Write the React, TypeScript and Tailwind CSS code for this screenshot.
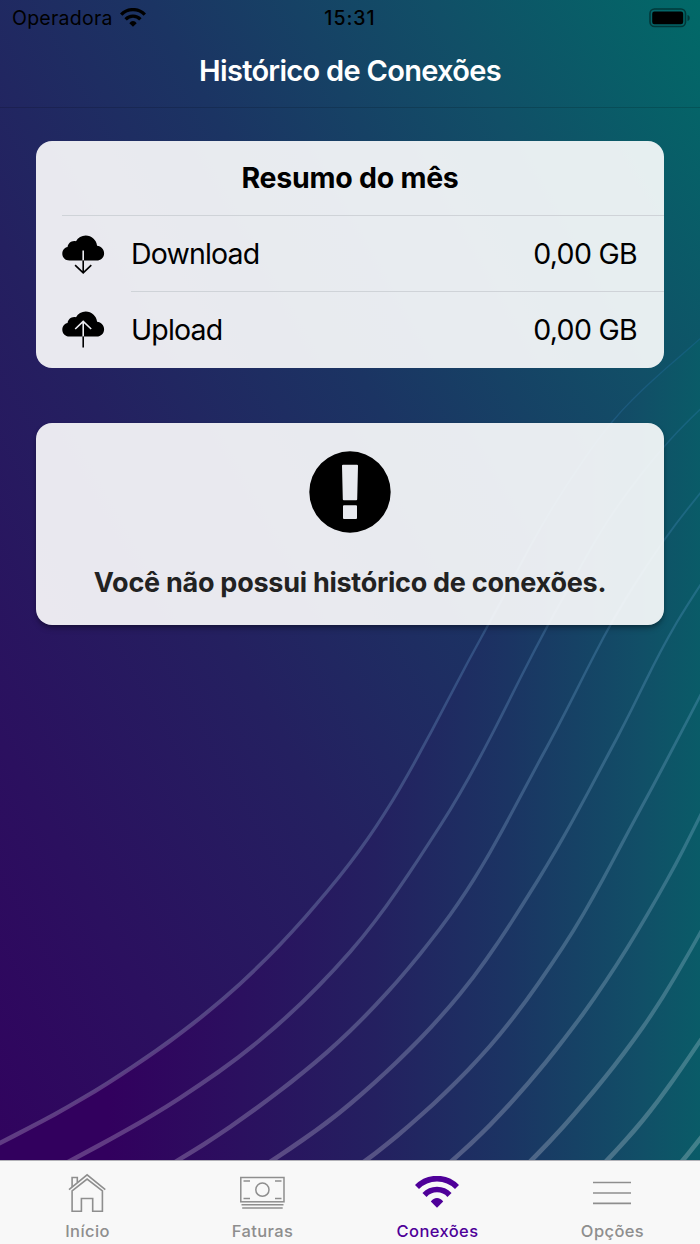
import React from 'react';

type Point = [number, number];

// Centre lines of the decorative curves, from the bottom left to the top right
const CURVES: Point[][] = [
  [[-60, 1172], [0, 1143], [108, 1083], [223, 999], [350, 863], [487, 627], [558, 499], [612, 422], [715, 325]],
  [[12, 1191], [70, 1161], [180, 1098], [260, 1040], [350, 952], [440, 826], [563, 598], [615, 510], [670, 440], [720, 390]],
  [[120, 1195], [230, 1127], [350, 1031], [450, 915], [547, 747], [625, 600], [665, 539], [720, 468]],
  [[215, 1199], [350, 1104], [460, 994], [538, 880], [617, 738], [677, 622], [720, 555]],
  [[310, 1201], [397, 1136], [490, 1046], [563, 947], [640, 810], [720, 658]],
  [[410, 1198], [490, 1125], [583, 1014], [667, 880], [725, 766]],
  [[495, 1197], [563, 1127], [643, 1027], [725, 890]],
  [[570, 1200], [643, 1120], [725, 1005]],
  [[650, 1200], [700, 1139], [725, 1106]],
];

// Unit tangent at a knot, weighted by the length of the two segments around it
const tangent = (points: Point[], i: number): Point => {
  const [x, y] = points[i];
  const a = points[i - 1] ?? [2 * x - points[i + 1][0], 2 * y - points[i + 1][1]];
  const b = points[i + 1] ?? [2 * x - a[0], 2 * y - a[1]];
  const before = Math.hypot(x - a[0], y - a[1]);
  const after = Math.hypot(b[0] - x, b[1] - y);
  const tx = ((x - a[0]) / before) * after + ((b[0] - x) / after) * before;
  const ty = ((y - a[1]) / before) * after + ((b[1] - y) / after) * before;
  const length = Math.hypot(tx, ty);
  return [tx / length, ty / length];
};

const smooth = (points: Point[]) =>
  points
    .slice(0, -1)
    .map((p, i) => {
      const next = points[i + 1];
      const handle = Math.hypot(next[0] - p[0], next[1] - p[1]) / 3;
      const t1 = tangent(points, i);
      const t2 = tangent(points, i + 1);
      const c1 = [p[0] + t1[0] * handle, p[1] + t1[1] * handle];
      const c2 = [next[0] - t2[0] * handle, next[1] - t2[1] * handle];
      return `C${c1} ${c2} ${next}`;
    })
    .join(' ');

/** The lines get thinner as they climb */
const ribbon = (points: Point[]) => {
  const side = (sign: number) =>
    points.map(([x, y], i): Point => {
      const [tx, ty] = tangent(points, i);
      const half = (Math.max(1.1, 1.1 + ((y - 350) / 810) * 3.5) / 2) * sign;
      return [x - ty * half, y + tx * half];
    });
  const left = side(1);
  const right = side(-1).reverse();
  return `M${left[0]} ${smooth(left)} L${right[0]} ${smooth(right)} Z`;
};

const BrandStops = () => (
  <>
    <stop offset="0" stopColor="#32005e" />
    <stop offset="0.4" stopColor="#242060" />
    <stop offset="0.6" stopColor="#1b3463" />
    <stop offset="0.8" stopColor="#114f67" />
    <stop offset="1" stopColor="#006b68" />
  </>
);

const Background = () => (
  <svg className="absolute inset-0 -z-10 h-full w-full" viewBox="0 0 700 1244" aria-hidden="true">
    <defs>
      <linearGradient id="base" gradientUnits="userSpaceOnUse" x1="0" y1="1244" x2="1075" y2="639">
        <BrandStops />
      </linearGradient>
      <linearGradient id="wave" gradientUnits="userSpaceOnUse" x1="108" y1="0" x2="775" y2="0">
        <BrandStops />
      </linearGradient>
      <linearGradient id="line" gradientUnits="userSpaceOnUse" x1="0" y1="1160" x2="0" y2="330">
        <stop offset="0" stopColor="#ffffff" stopOpacity="0.23" />
        <stop offset="0.6" stopColor="#6fa8d8" stopOpacity="0.27" />
        <stop offset="1" stopColor="#2070b0" stopOpacity="0.28" />
      </linearGradient>
    </defs>
    <rect width="700" height="1244" fill="url(#base)" />
    <path d={`M${CURVES[0][0]} ${smooth(CURVES[0])} V1244 H-60 Z`} fill="url(#wave)" />
    {CURVES.map((points, i) => (
      <path key={i} d={ribbon(points)} fill="url(#line)" />
    ))}
  </svg>
);

const WifiIcon = ({ className }: { className: string }) => (
  <svg className={className} viewBox="0 0 44 32" fill="none" stroke="currentColor" strokeWidth="5.6">
    <path d="M2 11A28 28 0 0 1 42 11" />
    <path d="M9.5 19A17.1 17.1 0 0 1 34.5 19" />
    <path d="M22 31.8 15.8 25.6Q18.3 22.1 22 22.1T28.2 25.6Z" fill="currentColor" stroke="none" />
  </svg>
);

const BatteryIcon = () => (
  <svg className="h-5 w-[42px]" viewBox="0 0 42 20" fill="none">
    <rect x="1" y="1" width="35.5" height="17.5" rx="4.5" stroke="#000" strokeOpacity="0.45" strokeWidth="1.6" />
    <rect x="3.2" y="3.5" width="31" height="12.7" rx="2.2" fill="#000" />
    <path d="M38.5 7v6c1.9-.6 2.2-1.8 2.2-3s-.3-2.4-2.2-3Z" fill="#000" fillOpacity="0.45" />
  </svg>
);

const CLOUD =
  'M7.5 26.5C3 26.5.3 23.4.3 19.7c0-3.4 2.2-6 5.3-6.7C5.9 9.4 9.5 6.2 14 7.3 16 3.6 19.6 1.5 23.7 1.5c6 0 10.6 4.3 11.4 10.2 4 .5 7 3.5 7 7.5 0 4.3-3.2 7.3-7.4 7.3Z';

const CloudIcon = ({ direction }: { direction: 'down' | 'up' }) => (
  <svg className="h-10 w-[43px]" viewBox="0 0 43 40" fill="none" strokeWidth="1.6">
    <path d={CLOUD} fill="#000" />
    {direction === 'down' ? (
      <>
        <path d="M21.2 16.5v10" stroke="#ececf1" />
        <path d="M21.2 26.5v12M13.1 31.2l8.1 7.7 8.1-7.7" stroke="#000" />
      </>
    ) : (
      <>
        <path d="M21.2 26.5V11.5M13.2 19l8-7.7 8 7.7" stroke="#ececf1" />
        <path d="M21.2 26.5V37.5" stroke="#000" />
      </>
    )}
  </svg>
);

const AlertIcon = () => (
  <svg className="h-[82px] w-[82px]" viewBox="0 0 82 82">
    <path
      fillRule="evenodd"
      d="M41 .3a40.7 40.7 0 1 0 0 81.4 40.7 40.7 0 0 0 0-81.4ZM34 13.8h14q1 0 1 1l-.8 33.5q0 1-1 1H34.8q-1 0-1-1L33 14.8q0-1 1-1ZM35 54.3h12q1 0 1 1v11.7q0 1-1 1H35q-1 0-1-1V55.3q0-1 1-1Z"
    />
  </svg>
);

const HomeIcon = () => (
  <svg className="h-10 w-[38px]" viewBox="0 0 38 40" fill="none" stroke="currentColor" strokeWidth="1.6">
    <path d="M1 16.6 19.1 1.8l18.2 14.8" />
    <path d="M4.1 14V4.5h5.2v5.1" />
    <path d="M4.1 17.8V38.2h9.3V25.500h11.300V38.200H34.400V17.800L19.100 6Z" />
  </svg>
);

const MoneyIcon = () => (
  <svg className="h-10 w-[45px]" viewBox="0 0 45 40" fill="none" stroke="currentColor" strokeWidth="1.5">
    <rect x=".8" y="4.5" width="43.2" height="24.3" />
    <circle cx="22.4" cy="16.7" r="6.6" />
    <path d="M3.5 7.9h6.5M35 7.9h6.5M3.5 25.4h6.5M35 25.4h6.5M1.5 31.7h42M2.2 35h40.5" />
  </svg>
);

const MenuIcon = () => (
  <svg className="h-10 w-[38px]" viewBox="0 0 38 40" stroke="currentColor" strokeWidth="1.7">
    <path d="M0 9.5h38M0 20h38M0 30.3h38" />
  </svg>
);

const TABS = [
  { label: 'Início', icon: <HomeIcon />, active: false },
  { label: 'Faturas', icon: <MoneyIcon />, active: false },
  { label: 'Conexões', icon: <WifiIcon className="mb-0.5 h-8 w-11" />, active: true },
  { label: 'Opções', icon: <MenuIcon />, active: false },
];

interface UsageRowProps {
  label: string;
  value: string;
  direction: 'down' | 'up';
}

const UsageRow: React.FC<UsageRowProps> = ({ label, value, direction }) => (
  <div className="flex h-[76px] pl-[26px]">
    <div className="flex w-[69px] items-center">
      <CloudIcon direction={direction} />
    </div>
    <div
      className={`flex flex-1 items-center justify-between pr-[27px] text-[28.5px] tracking-[-0.85px] ${
        direction === 'down' ? 'border-b border-[#cfd3d8] pt-[3px]' : 'pt-px'
      }`}
    >
      <span>{label}</span>
      <span className="tracking-[-0.7px]">{value}</span>
    </div>
  </div>
);

const App: React.FC = () => {
  return (
    <div className="relative isolate flex h-[1244px] w-[700px] flex-col overflow-hidden font-['Inter',sans-serif] text-black">
      <Background />

      {/* Status bar */}
      <div className="grid h-9 grid-cols-3 items-center px-3 text-[19.5px]">
        <div className="flex items-center gap-[7px] pt-0.5">
          <span className="tracking-[0.25px]">Operadora</span>
          <WifiIcon className="mb-1 h-[19px] w-[26px]" />
        </div>
        <span className="pt-0.5 text-center font-medium tracking-[1px]">15:31</span>
        <div className="-mr-[3px] flex justify-end">
          <BatteryIcon />
        </div>
      </div>

      {/* Header */}
      <header className="flex h-[72px] items-center justify-center border-b border-black/15 pb-0.5">
        <h1 className="text-[29px] font-semibold tracking-[-0.7px] text-white">Histórico de Conexões</h1>
      </header>

      <main className="flex flex-1 flex-col gap-[54.5px] px-9 pt-[32.5px]">
        {/* Resumo */}
        <section className="h-[227.5px] overflow-hidden rounded-2xl bg-white/90">
          <div className="pl-[26px]">
            <h2 className="flex h-[75px] items-center justify-center border-b border-[#cfd3d8] pt-0.5 pr-[26px] text-[28.5px] font-bold tracking-[-0.25px]">
              Resumo do mês
            </h2>
          </div>
          <UsageRow label="Download" value="0,00 GB" direction="down" />
          <UsageRow label="Upload" value="0,00 GB" direction="up" />
        </section>

        {/* Histórico vazio */}
        <section className="flex h-[202.5px] flex-col items-center rounded-2xl bg-white/90 pt-7 shadow-md shadow-black/30">
          <AlertIcon />
          <p className="mt-8 text-[27px] leading-9 font-bold tracking-[-0.26px] text-[#222222]">
            Você não possui histórico de conexões.
          </p>
        </section>
      </main>

      {/* Tab bar */}
      <nav className="grid h-[84px] grid-cols-4 border-t border-[#b2b2b8] bg-[#f8f8f8]">
        {TABS.map((tab) => (
          <div
            key={tab.label}
            className={`flex flex-col items-center pt-3 ${tab.active ? 'text-[#4f0099]' : 'text-[#8e8e8e]'}`}
          >
            <div className="mr-px flex h-10 items-center">{tab.icon}</div>
            <span className="mt-1.5 text-[16.5px] leading-6 font-medium tracking-[0.4px]">{tab.label}</span>
          </div>
        ))}
      </nav>
    </div>
  );
};

export default App;
